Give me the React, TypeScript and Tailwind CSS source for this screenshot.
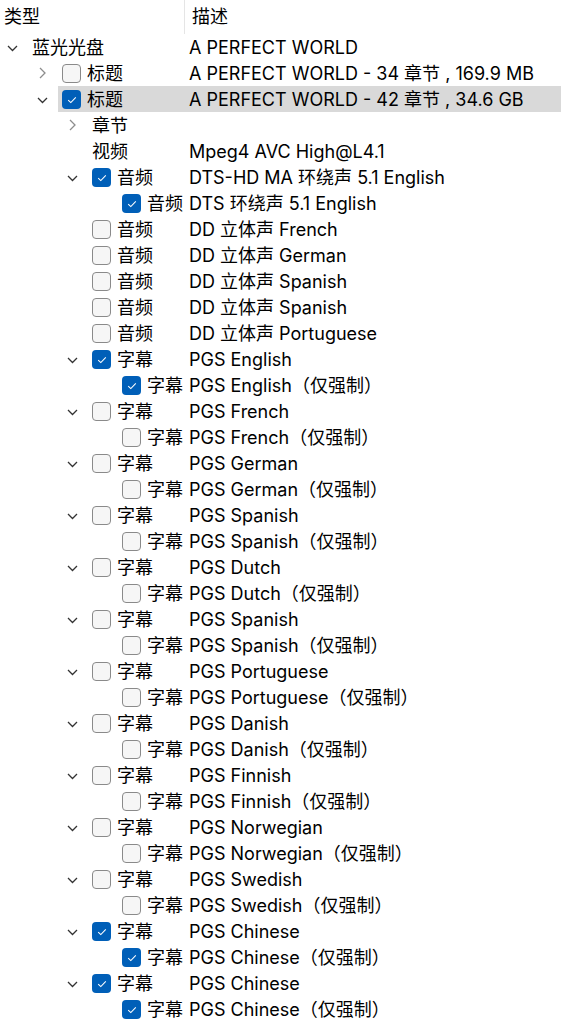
import React from "react";

type Row = {
  level: number;
  chevron?: "open" | "closed";
  check?: boolean;
  label: string;
  desc: string;
  selected?: boolean;
};

// widths per level, written out so tailwind picks them up
const leadW = ["w-[28px]", "w-[58px]", "w-[88px]", "w-[118px]"];
const typeW = ["w-[157px]", "w-[127px]", "w-[97px]", "w-[67px]"];
const chevronPad = ["pl-[2px]", "pl-[32px]", "pl-[62px]", "pl-[92px]"];

const subtitle = (name: string, checked: boolean): Row[] => [
  { level: 2, chevron: "open", check: checked, label: "字幕", desc: `PGS ${name}` },
  { level: 3, check: checked, label: "字幕", desc: `PGS ${name}（仅强制）` },
];

const rows: Row[] = [
  { level: 0, chevron: "open", label: "蓝光光盘", desc: "A PERFECT WORLD" },
  { level: 1, chevron: "closed", check: false, label: "标题", desc: "A PERFECT WORLD - 34 章节 , 169.9 MB" },
  { level: 1, chevron: "open", check: true, label: "标题", desc: "A PERFECT WORLD - 42 章节 , 34.6 GB", selected: true },
  { level: 2, chevron: "closed", label: "章节", desc: "" },
  { level: 2, label: "视频", desc: "Mpeg4 AVC High@L4.1" },
  { level: 2, chevron: "open", check: true, label: "音频", desc: "DTS-HD MA 环绕声 5.1 English" },
  { level: 3, check: true, label: "音频", desc: "DTS 环绕声 5.1 English" },
  { level: 2, check: false, label: "音频", desc: "DD 立体声 French" },
  { level: 2, check: false, label: "音频", desc: "DD 立体声 German" },
  { level: 2, check: false, label: "音频", desc: "DD 立体声 Spanish" },
  { level: 2, check: false, label: "音频", desc: "DD 立体声 Spanish" },
  { level: 2, check: false, label: "音频", desc: "DD 立体声 Portuguese" },
  ...subtitle("English", true),
  ...subtitle("French", false),
  ...subtitle("German", false),
  ...subtitle("Spanish", false),
  ...subtitle("Dutch", false),
  ...subtitle("Spanish", false),
  ...subtitle("Portuguese", false),
  ...subtitle("Danish", false),
  ...subtitle("Finnish", false),
  ...subtitle("Norwegian", false),
  ...subtitle("Swedish", false),
  ...subtitle("Chinese", true),
  ...subtitle("Chinese", true),
];

const Chevron = ({ kind }: { kind?: "open" | "closed" }) => {
  if (!kind) return null;
  if (kind === "open")
    return (
      <svg width="11" height="7" viewBox="0 0 11 7" fill="none" className="mt-[2px]">
        <path d="M1 1 L5.5 5.5 L10 1" stroke="#333333" strokeWidth="1.3" />
      </svg>
    );
  return (
    <svg width="7" height="12" viewBox="0 0 7 12" fill="none">
      <path d="M1 1 L6 6 L1 11" stroke="#8d8d8d" strokeWidth="1.3" />
    </svg>
  );
};

const Checkbox = ({ checked }: { checked: boolean }) =>
  checked ? (
    <div className="mr-[6px] flex h-[19px] w-[19px] shrink-0 items-center justify-center rounded-[4px] bg-[#005fb8]">
      <svg width="10" height="8" viewBox="0 0 10 8" fill="none">
        <path d="M1.2 4.2 L3.8 6.6 L8.8 1.4" stroke="#ffffff" strokeWidth="1.1" />
      </svg>
    </div>
  ) : (
    <div className="mr-[6px] h-[19px] w-[19px] shrink-0 rounded-[4px] border border-[#8a8a8a] bg-[#f6f6f6]" />
  );

const TreeRow = ({ row }: { row: Row }) => (
  <div className="flex h-[26px] items-stretch">
    <div className={`${leadW[row.level]} flex shrink-0 items-center`}>
      <div className={`${chevronPad[row.level]} flex items-center`}>
        <div className="flex w-[20px] items-center justify-center">
          <Chevron kind={row.chevron} />
        </div>
      </div>
    </div>
    <div className={`flex flex-1 items-center pt-[1px] ${row.selected ? "bg-[#d9d9d9]" : ""}`}>
      <div className={`${typeW[row.level]} flex shrink-0 items-center pl-[4px]`}>
        {row.check !== undefined && <Checkbox checked={row.check} />}
        <span className="whitespace-nowrap">{row.label}</span>
      </div>
      <div className="whitespace-nowrap pl-[4px]">{row.desc}</div>
    </div>
  </div>
);

export default function App() {
  return (
    <div
      className="min-h-screen overflow-hidden bg-white text-[18px] leading-[26px] text-black"
      style={{ fontFamily: 'Inter, "Noto Sans CJK SC", sans-serif' }}
    >
      <div className="flex h-[34px] items-center">
        <div className="flex h-full w-[185px] items-center border-r border-[#e5e5e5] pl-[4px]">类型</div>
        <div className="pl-[7px]">描述</div>
      </div>
      {rows.map((r, i) => (
        <TreeRow key={i} row={r} />
      ))}
    </div>
  );
}
